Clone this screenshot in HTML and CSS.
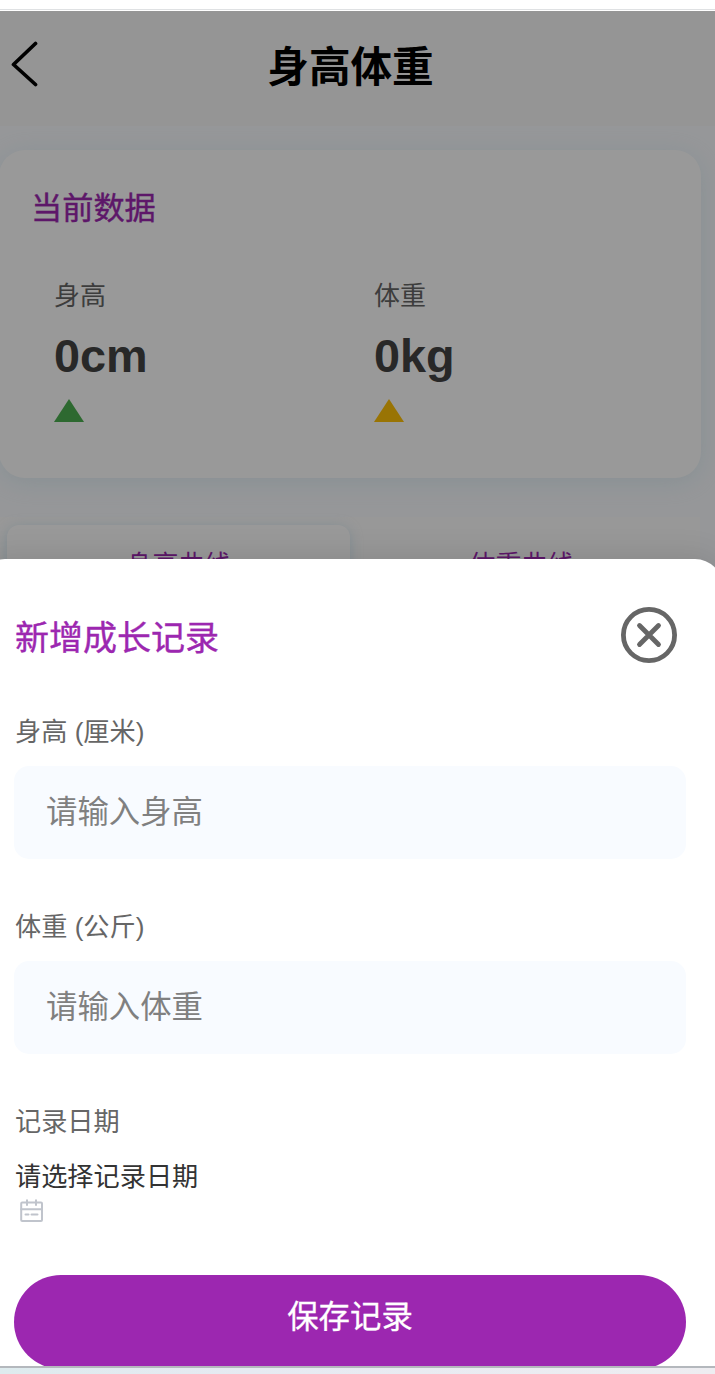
FILE: index.html
```
<!DOCTYPE html>
<html lang="zh-CN">
<head>
    <meta charset="utf-8">
    <meta name="viewport" content="width=device-width, initial-scale=1">
    <title>身高体重</title>
    <link rel="stylesheet" href="styles.css">
</head>

<body>
    <div class="top-line"></div>

    <div class="screen">
        <header class="nav">
            <svg class="back" viewBox="0 0 28 48"><path d="M24.5 4.5L2.5 25.5L24.5 45.5"/></svg>
            <h1>身高体重</h1>
        </header>

        <section class="card">
            <h2>当前数据</h2>
            <div class="stats">
                <div class="stat">
                    <div class="stat-label">身高</div>
                    <div class="stat-value">0cm</div>
                    <div class="arrow green"></div>
                </div>
                <div class="stat">
                    <div class="stat-label">体重</div>
                    <div class="stat-value">0kg</div>
                    <div class="arrow yellow"></div>
                </div>
            </div>
        </section>

        <div class="tabs">
            <div class="tab active">身高曲线</div>
            <div class="tab">体重曲线</div>
        </div>

        <div class="mask"></div>

        <form class="sheet">
            <div class="sheet-head">
                <h2>新增成长记录</h2>
                <svg class="close" viewBox="0 0 58 58">
                    <circle cx="29" cy="29" r="25.6"/>
                    <path d="M19.5 19.5L38.5 38.5M38.5 19.5L19.5 38.5"/>
                </svg>
            </div>

            <label class="label" for="height">身高 (厘米)</label>
            <input class="field" id="height" type="text" placeholder="请输入身高">

            <label class="label" for="weight">体重 (公斤)</label>
            <input class="field" id="weight" type="text" placeholder="请输入体重">

            <div class="label">记录日期</div>
            <div class="date">请选择记录日期</div>
            <svg class="calendar" viewBox="0 0 24 24">
                <rect x="1.2" y="3.4" width="20.8" height="18.6" rx="1"/>
                <path d="M1.2 10.3H22M7 1.2V6M16 1.2V6M5.5 15.5H8.5M11.5 15.5H17.5"/>
            </svg>

            <button class="save" type="button">保存记录</button>
        </form>
    </div>

    <div class="bottom-line"></div>
</body>
</html>
```
FILE: styles.css
```
*{box-sizing: border-box;}

body{
    margin: 0;
    height: 1374px;
    display: flex;
    flex-direction: column;
    overflow: hidden;
    background-color: #fff;
    font-family: "Liberation Sans", "Noto Sans CJK SC", sans-serif;}

h1, h2{margin: 0;}

.top-line{
    height: 10px;
    margin-bottom: 1px;
    border-bottom: 1px solid #dfe1e3;}

.screen{
    position: relative;
    height: 1355px;
    overflow: hidden;
    background-color: #fafcff;}

/* 顶部导航 */
.nav{
    display: flex;
    align-items: center;
    height: 115px;
    padding: 0 14px 1px 11px;
    background-color: #f8f8f8;}

.back{
    width: 28px;
    height: 48px;
    margin-top: -10px;
    fill: none;
    stroke: #000;
    stroke-width: 3.7;
    stroke-linecap: round;
    stroke-linejoin: round;}

.nav h1{
    flex: 1;
    padding-right: 39px;
    text-align: center;
    font-size: 41.6px;
    line-height: 60px;}

/* 当前数据 */
.card{
    width: 702px;
    height: 328px;
    margin: 24px 0 0 -1px;
    padding: 36px 32px;
    border-radius: 26px;
    background-color: #fff;
    box-shadow: 0 4px 24px rgba(173, 216, 230, 0.3);}

.card h2{
    color: #9c27b0;
    font-size: 31.2px;
    font-weight: 400;
    line-height: 46px;
    -webkit-text-stroke: 0.4px #9c27b0;}

.stats{
    display: grid;
    grid-template-columns: 320px 1fr;
    padding: 45px 0 0 23px;}

.stat-label{
    color: #666;
    font-size: 26px;
    line-height: 38px;}

.stat-value{
    margin-top: 14px;
    color: #444;
    font-size: 46.8px;
    font-weight: bold;
    line-height: 54px;}

.arrow{
    width: 0;
    margin-top: 16px;
    border: 15px solid transparent;
    border-top: 0;
    border-bottom-width: 23px;}
.green{border-bottom-color: #4caf50;}
.yellow{border-bottom-color: #ffc107;}

.tabs{
    display: flex;
    margin: 39px 15px 0 0;
    padding: 8px 7px;
    background-color: #fdfdfd;}

.tab{
    flex: 1;
    height: 76px;
    padding-top: 21px;
    border-radius: 12px;
    color: #9c27b0;
    text-align: center;
    font-size: 26px;
    line-height: 38px;}

.tab.active{
    background-color: #fff;
    box-shadow: 0 2px 12px rgba(173, 216, 240, 0.5);}

.mask{
    position: absolute;
    inset: 0;
    background-color: rgba(0, 0, 0, 0.4);}

/* 新增记录弹层 */
.sheet{
    position: absolute;
    top: 548px;
    left: -23px;
    display: flex;
    flex-direction: column;
    width: 746px;
    height: 840px;
    padding: 48px 37px 0;
    border-radius: 28px 28px 0 0;
    background-color: #fff;
    box-shadow: 0 -4px 30px rgba(0, 0, 0, 0.1);}

.sheet-head{
    display: flex;
    justify-content: space-between;
    height: 58px;
    margin-bottom: 48px;
    padding: 0 8px 0 1px;}

.sheet-head h2{
    padding-top: 6px;
    color: #9c27b0;
    font-size: 34px;
    font-weight: 400;
    line-height: 50px;
    -webkit-text-stroke: 0.4px #9c27b0;}

.close{
    width: 58px;
    height: 58px;
    margin-top: -1px;
    fill: none;
    stroke: #666;
    stroke-width: 4.8;
    stroke-linecap: round;}

.label{
    height: 38px;
    margin-bottom: 15px;
    padding-left: 1px;
    color: #666;
    font-size: 26.2px;
    line-height: 39px;}

.field{
    height: 93px;
    margin: 0 0 49px;
    padding: 0 32px;
    border: 0;
    border-radius: 15px;
    outline: none;
    background-color: #f8fbff;
    font-family: inherit;
    font-size: 31.4px;}
.field::placeholder{color: #808080;}

.date{
    padding: 2px 0 0 1px;
    color: #333;
    font-size: 26.2px;
    line-height: 38px;}

.calendar{
    width: 24px;
    height: 24px;
    margin: 3px 0 0 6px;
    fill: none;
    stroke: #c0c4cc;
    stroke-width: 2;
    stroke-linecap: round;
    stroke-linejoin: round;}

.save{
    height: 94px;
    margin-top: 52px;
    padding: 0 0 16px;
    border: 0;
    border-radius: 47px;
    background-color: #9c27b0;
    color: #fff;
    font-family: inherit;
    font-size: 31.4px;
    -webkit-text-stroke: 0.3px #fff;}

.bottom-line{
    height: 8px;
    border-top: 2px solid #b4b8bd;
    background: linear-gradient(90deg, #deebee, #e6eaf2 35%, #eeedf1);}
```
